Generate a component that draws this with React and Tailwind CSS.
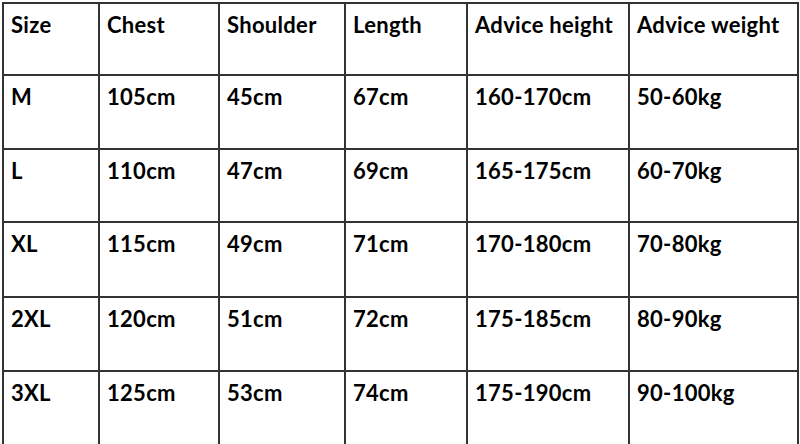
import React from "react";

const header = ["Size", "Chest", "Shoulder", "Length", "Advice height", "Advice weight"];
const rows = [
  ["M", "105cm", "45cm", "67cm", "160-170cm", "50-60kg"],
  ["L", "110cm", "47cm", "69cm", "165-175cm", "60-70kg"],
  ["XL", "115cm", "49cm", "71cm", "170-180cm", "70-80kg"],
  ["2XL", "120cm", "51cm", "72cm", "175-185cm", "80-90kg"],
  ["3XL", "125cm", "53cm", "74cm", "175-190cm", "90-100kg"],
];
const heights = ["h-[72px]", "h-[74px]", "h-[73px]", "h-[75px]", "h-[74px]", "h-[74px]"];

function Row({ cells, h, first }) {
  return (
    <div className={`grid grid-cols-[96px_120px_126px_122px_162px_169px] ${h}`}>
      {cells.map((c, i) => (
        <div
          key={i}
          className={`border-r-2 border-b-2 border-[#333333] pl-[7px] ${first ? "pt-[7px]" : "pt-[7px]"} text-[22px] font-bold tracking-[0.3px] text-black leading-[28px] whitespace-nowrap`}
        >
          {c}
        </div>
      ))}
    </div>
  );
}

export default function App() {
  return (
    <div className="w-[800px] h-[444px] bg-white overflow-hidden" style={{ fontFamily: "Lato, 'Open Sans', sans-serif" }}>
      <div className="ml-[2px] mt-[2px] w-[797px] border-l-2 border-t-2 border-[#333333]">
        <Row cells={header} h={heights[0]} first />
        {rows.map((r, i) => (
          <Row key={i} cells={r} h={heights[i + 1]} />
        ))}
      </div>
    </div>
  );
}
